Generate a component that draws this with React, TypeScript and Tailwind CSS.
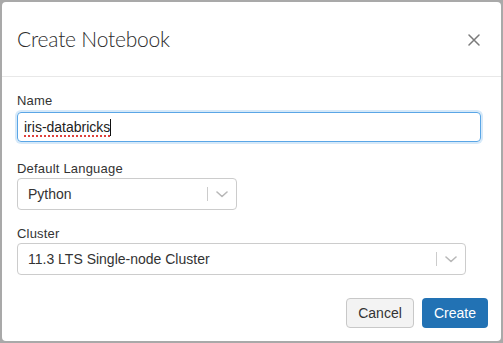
import React from "react";

function Chevron() {
  return (
    <svg width="12" height="7" viewBox="0 0 12 7" fill="none">
      <path d="M1 1 L6 5.5 L11 1" stroke="#b8b8b8" strokeWidth="1.6" strokeLinecap="round" strokeLinejoin="round" />
    </svg>
  );
}

function Select({ value, width }: { value: string; width: string }) {
  return (
    <div className={`${width} h-[32px] flex items-center border border-[#cccccc] rounded-[4px] bg-white`}>
      <span className="flex-1 pl-[10px] text-[14px] text-[#333333]">{value}</span>
      <div className="w-px h-[14px] bg-[#cccccc]" />
      <div className="w-[28px] flex items-center justify-center">
        <Chevron />
      </div>
    </div>
  );
}

export default function App() {
  return (
    <div className="w-[503px] h-[343px] bg-[#a9a9a9] p-[2px] font-['Liberation_Sans',Arial,sans-serif]">
      <div className="h-full bg-white rounded-[4px] flex flex-col">
        {/* Header */}
        <div className="h-[75px] border-b border-[#e8e8e8] flex items-center justify-between pl-[15px] pr-[21px] shrink-0">
          <h2 className="text-[21px] font-light text-[#2b2b2b] font-['Lato',sans-serif] tracking-[-0.2px]">
            Create Notebook
          </h2>
          <svg width="12" height="12" viewBox="0 0 12 12" className="mt-[2px]">
            <path d="M1 1 L11 11 M11 1 L1 11" stroke="#7a7a7a" strokeWidth="1.5" strokeLinecap="round" />
          </svg>
        </div>

        {/* Body */}
        <div className="px-[15px] pt-[16px] flex flex-col">
          <label className="text-[13px] leading-[16px] text-[#333333] tracking-[0.2px]">Name</label>
          <div className="mt-[3px] w-[464px] h-[30px] flex items-center border border-[#5aa6e6] rounded-[4px] shadow-[0_0_0_2px_rgba(90,166,230,0.25)] pl-[6px]">
            <span className="text-[14px] text-[#222222] underline decoration-dotted decoration-[#e0403a] decoration-[1.5px] underline-offset-[4px]">
              iris-databricks
            </span>
            <span className="w-px h-[17px] bg-[#111111]" />
          </div>

          <label className="mt-[19px] text-[13px] leading-[16px] text-[#333333] tracking-[0.2px]">Default Language</label>
          <div className="mt-[1px]">
            <Select value="Python" width="w-[220px]" />
          </div>

          <label className="mt-[16px] text-[13px] leading-[16px] text-[#333333] tracking-[0.2px]">Cluster</label>
          <div className="mt-[1px]">
            <Select value="11.3 LTS Single-node Cluster" width="w-[449px]" />
          </div>
        </div>

        {/* Footer */}
        <div className="flex justify-end gap-[8px] pr-[13px] pt-[23px]">
          <button className="w-[68px] h-[30px] rounded-[4px] border border-[#c8c8c8] bg-[#f3f3f3] text-[14px] text-[#333333]">
            Cancel
          </button>
          <button className="w-[66px] h-[30px] rounded-[4px] bg-[#2272b4] text-[14px] text-white">
            Create
          </button>
        </div>
      </div>
    </div>
  );
}
